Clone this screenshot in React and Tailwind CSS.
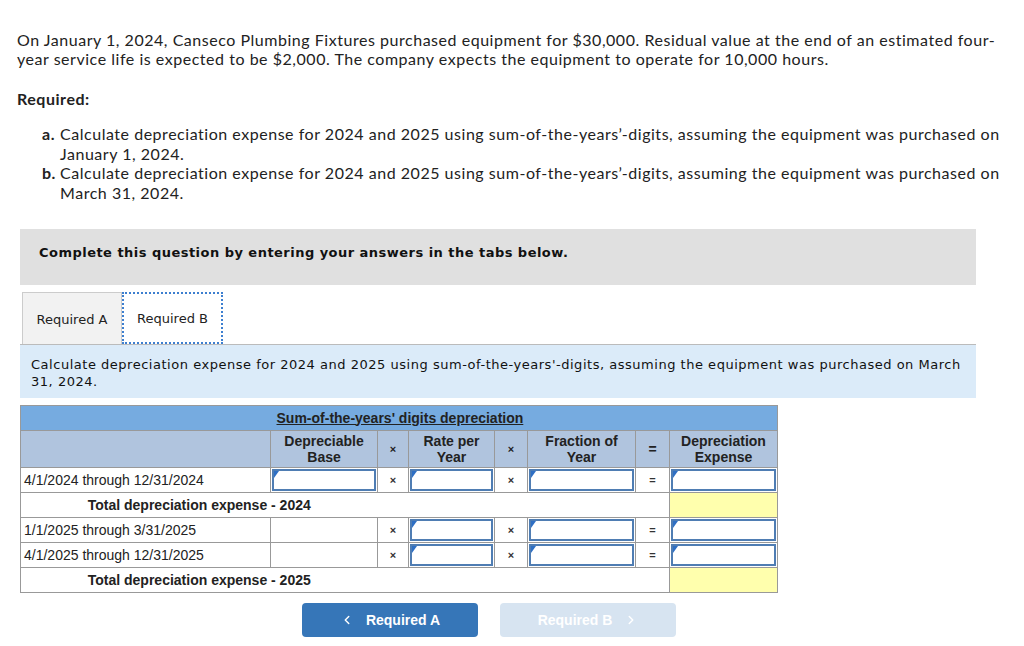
import React from 'react';
import { ChevronLeft, ChevronRight } from 'lucide-react';

const proxima = { fontFamily: 'Lato, "Open Sans", "Liberation Sans", sans-serif' };

function Flag() {
    return <span className="absolute left-0 top-0 w-0 h-0 border-t-[7px] border-t-[#2e6fc4] border-r-[5px] border-r-transparent" />;
}

function InputCell({ yellow }) {
    if (yellow) return <td className="border border-[#999] bg-[#ffffad] p-0" />;
    return (
        <td className="border border-[#999] p-px">
            <div className="relative h-[22px] border-2 border-[#4f7db3] bg-white">
                <Flag />
            </div>
        </td>
    );
}

function OpCell({ op }) {
    return <td className="border border-[#999] text-center text-[11px] font-bold text-[#333]">{op}</td>;
}

function DataRow({ label, baseInput }) {
    return (
        <tr className="h-[25px]">
            <td className="border border-[#999] pl-[3px] text-[14px] text-[#222]">{label}</td>
            {baseInput ? <InputCell /> : <td className="border border-[#999]" />}
            <OpCell op="×" />
            <InputCell />
            <OpCell op="×" />
            <InputCell />
            <OpCell op="=" />
            <InputCell />
        </tr>
    );
}

function TotalRow({ label }) {
    return (
        <tr className="h-[25px]">
            <td colSpan={2} className="border-y border-l border-[#999] text-center text-[14px] font-bold text-[#222]">{label}</td>
            <td colSpan={5} className="border-y border-r border-[#999]" />
            <InputCell yellow />
        </tr>
    );
}

export default function App() {
    return (
        <div className="w-[1024px] h-[646px] bg-white text-[#222] overflow-hidden">
            <div className="pl-[17px] pt-[30px] text-[16px] leading-[19px] tracking-[0.53px]" style={proxima}>
                <p className="whitespace-nowrap">
                    On January 1, 2024, Canseco Plumbing Fixtures purchased equipment for $30,000. Residual value at the end of an estimated four-<br />
                    year service life is expected to be $2,000. The company expects the equipment to operate for 10,000 hours.
                </p>
                <p className="mt-[21px] font-bold">Required:</p>
                <div className="mt-[16px] pl-[25px] leading-[19.5px]">
                    <div className="flex whitespace-nowrap">
                        <span className="w-[18px] font-bold">a.</span>
                        <span>Calculate depreciation expense for 2024 and 2025 using sum-of-the-years’-digits, assuming the equipment was purchased on<br />January 1, 2024.</span>
                    </div>
                    <div className="flex whitespace-nowrap">
                        <span className="w-[18px] font-bold">b.</span>
                        <span>Calculate depreciation expense for 2024 and 2025 using sum-of-the-years’-digits, assuming the equipment was purchased on<br />March 31, 2024.</span>
                    </div>
                </div>
            </div>

            <div className="mx-[20px] w-[956px]" style={{ fontFamily: '"DejaVu Sans", Verdana, sans-serif' }}>
                <div className="mt-[27px] h-[56px] bg-[#e0e0e0] pl-[19px] pt-[14px] text-[13px] font-bold tracking-[0.47px] text-[#111]">
                    Complete this question by entering your answers in the tabs below.
                </div>

                <div className="mt-[7px] flex h-[53px] items-stretch border-b border-[#bbb] pl-[2px] text-[13px]">
                    <div className="flex w-[100px] items-center justify-center border border-b-0 border-[#ccc] bg-[#f2f2f2] pt-[2px] text-[#222]">Required A</div>
                    <div className="flex w-[101px] items-center justify-center border-2 border-dotted border-[#3d7fd0] bg-white pt-[2px] text-[#222]">Required B</div>
                </div>

                <div className="h-[53px] bg-[#dbebf9] px-[11px] pt-[11px] text-[13px] leading-[17px] tracking-[0.52px] text-[#111]">
                    Calculate depreciation expense for 2024 and 2025 using sum-of-the-years'-digits, assuming the equipment was purchased on March<br />31, 2024.
                </div>
            </div>

            <div className="ml-[20px] mt-[7px]" style={{ fontFamily: '"Liberation Sans", Arial, sans-serif' }}>
                <table className="w-[757px] table-fixed border-collapse">
                    <colgroup>
                        <col className="w-[250px]" />
                        <col className="w-[107px]" />
                        <col className="w-[31px]" />
                        <col className="w-[86px]" />
                        <col className="w-[33px]" />
                        <col className="w-[108px]" />
                        <col className="w-[34px]" />
                        <col className="w-[108px]" />
                    </colgroup>
                    <thead>
                        <tr className="h-[25px] bg-[#76abe0]">
                            <th className="border-y border-l border-[#999]" />
                            <th colSpan={7} className="border-y border-r border-[#999] pl-[6px] text-left text-[14px] font-bold text-[#222] underline">
                                Sum-of-the-years' digits depreciation
                            </th>
                        </tr>
                        <tr className="h-[37px] bg-[#b0c4de] text-[14px] font-bold leading-[16px] text-[#222]">
                            <th className="border border-[#999]" />
                            <th className="border border-[#999]">Depreciable<br />Base</th>
                            <th className="border border-[#999] text-[11px]">×</th>
                            <th className="border border-[#999]">Rate per<br />Year</th>
                            <th className="border border-[#999] text-[11px]">×</th>
                            <th className="border border-[#999]">Fraction of<br />Year</th>
                            <th className="border border-[#999]">=</th>
                            <th className="border border-[#999]">Depreciation<br />Expense</th>
                        </tr>
                    </thead>
                    <tbody>
                        <DataRow label="4/1/2024 through 12/31/2024" baseInput />
                        <TotalRow label="Total depreciation expense - 2024" />
                        <DataRow label="1/1/2025 through 3/31/2025" />
                        <DataRow label="4/1/2025 through 12/31/2025" />
                        <TotalRow label="Total depreciation expense - 2025" />
                    </tbody>
                </table>

                <div className="mt-[10px] flex gap-[22px] pl-[282px] text-[14px] font-bold text-white">
                    <button className="flex h-[34px] w-[176px] items-center justify-center gap-[12px] rounded-sm bg-[#3676b8]">
                        <ChevronLeft size={14} strokeWidth={2.5} />
                        <span>Required A</span>
                    </button>
                    <button className="flex h-[34px] w-[176px] items-center justify-center gap-[12px] rounded-sm bg-[#d7e4f1]">
                        <span>Required B</span>
                        <ChevronRight size={14} strokeWidth={2.5} />
                    </button>
                </div>
            </div>
        </div>
    );
}
